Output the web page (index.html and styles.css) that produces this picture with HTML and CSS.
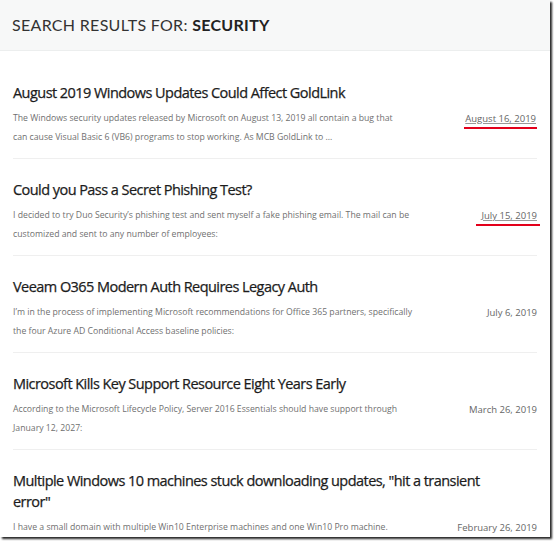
FILE: index.html
```html
<!DOCTYPE html>
<html>
<head>
<meta charset="utf-8">
<link rel="stylesheet" href="styles.css">
</head>
<body>
<div class="frame">
  <header class="page-header">
    <h1 class="page-title">Search Results for: <strong>Security</strong></h1>
  </header>
  <main class="results">
    <article class="result">
      <h2 class="result-title">August 2019 Windows Updates Could Affect GoldLink</h2>
      <div class="result-body">
        <p class="excerpt">The Windows security updates released by Microsoft on August 13, 2019 all contain a bug that<br>can cause Visual Basic 6 (VB6) programs to stop working. As MCB GoldLink to …</p>
        <div class="date"><span class="marked">August 16, 2019</span></div>
      </div>
    </article>
    <article class="result">
      <h2 class="result-title">Could you Pass a Secret Phishing Test?</h2>
      <div class="result-body">
        <p class="excerpt">I decided to try Duo Security’s phishing test and sent myself a fake phishing email. The mail can be customized and sent to any number of employees:</p>
        <div class="date"><span class="marked wide">July 15, 2019</span></div>
      </div>
    </article>
    <article class="result">
      <h2 class="result-title">Veeam O365 Modern Auth Requires Legacy Auth</h2>
      <div class="result-body">
        <p class="excerpt">I’m in the process of implementing Microsoft recommendations for Office 365 partners, specifically the four Azure AD Conditional Access baseline policies:</p>
        <div class="date">July 6, 2019</div>
      </div>
    </article>
    <article class="result">
      <h2 class="result-title">Microsoft Kills Key Support Resource Eight Years Early</h2>
      <div class="result-body">
        <p class="excerpt">According to the Microsoft Lifecycle Policy, Server 2016 Essentials should have support through January 12, 2027:</p>
        <div class="date">March 26, 2019</div>
      </div>
    </article>
    <article class="result">
      <h2 class="result-title">Multiple Windows 10 machines stuck downloading updates, "hit a transient error"</h2>
      <div class="result-body">
        <p class="excerpt">I have a small domain with multiple Win10 Enterprise machines and one Win10 Pro machine.</p>
        <div class="date">February 26, 2019</div>
      </div>
    </article>
  </main>
</div>
</body>
</html>
```

FILE: styles.css
```css
html, body {
  margin: 0;
  padding: 0;
  background: #fff;
}

body {
  font-family: "Open Sans", "Liberation Sans", sans-serif;
  width: 554px;
  height: 541px;
  overflow: hidden;
}

.frame {
  width: 550px;
  height: 537px;
  overflow: hidden;
  background: #fff;
  box-shadow: 2px 2px 2px rgba(0, 0, 0, 0.85);
}

.page-header {
  height: 50px;
  background: #f7f8f8;
  border-bottom: 1px solid #eceeee;
  display: flex;
  align-items: center;
  padding: 0 12px;
}

.page-title {
  margin: 0 0 2px 0;
  font-family: "Lato", "Open Sans", sans-serif;
  font-size: 16px;
  font-weight: 400;
  letter-spacing: 0.3px;
  text-transform: uppercase;
  color: #333;
}

.page-title strong {
  font-weight: 700;
  color: #222;
}

.results {
  padding: 11px 13px 0 13px;
}

.result {
  padding: 20px 0 11px 0;
  border-bottom: 1px solid #efefef;
}

.result-title {
  margin: 0 0 6px 0;
  padding-right: 20px;
  font-family: "Open Sans", sans-serif;
  font-size: 14.5px;
  line-height: 21px;
  font-weight: 400;
  letter-spacing: -0.55px;
  -webkit-text-stroke: 0.25px #1c1c1c;
  color: #1c1c1c;
}

.result-body {
  display: flex;
  justify-content: space-between;
  align-items: flex-start;
}

.excerpt {
  margin: 0;
  width: 408px;
  font-size: 8.7px;
  line-height: 19px;
  color: #707070;
}

.date {
  font-size: 9.5px;
  line-height: 19px;
  color: #666;
  white-space: nowrap;
}

.marked {
  display: inline-block;
  line-height: 14px;
  text-decoration: underline;
  text-decoration-color: #999;
  border-bottom: 2px solid #e3001b;
  padding: 0 1px 1px 1px;
}

.marked.wide {
  padding: 0 3px 1px 5px;
  margin-right: -3px;
}
```
